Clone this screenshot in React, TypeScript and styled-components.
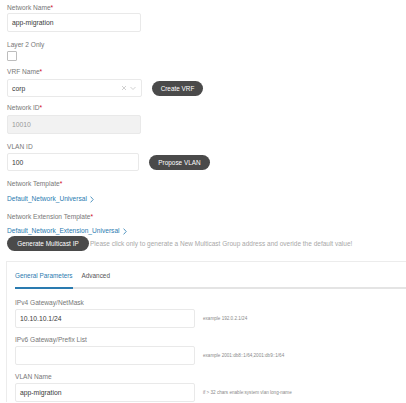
import React from "react";
import styled, { createGlobalStyle } from "styled-components";

const Global = createGlobalStyle`
  html, body { margin: 0; padding: 0; background: #fff; }
  body { font-family: "Liberation Sans", Arial, sans-serif; color: #555; overflow: hidden; }
  * { box-sizing: border-box; }
`;

const Page = styled.div`
  width: 406px;
  height: 403px;
  overflow: hidden;
  padding: 4px 0 0 7px;
  display: flex;
  flex-direction: column;
`;

const Field = styled.div<{ $mb?: number }>`
  display: flex;
  flex-direction: column;
  margin-bottom: ${(p) => p.$mb ?? 9}px;
`;

const Label = styled.div<{ $mb?: number }>`
  font-size: 6.6px;
  line-height: 8px;
  color: #777;
  margin-bottom: ${(p) => p.$mb ?? 1}px;
`;

const Req = styled.span`
  color: #d0021b;
`;

const Row = styled.div`
  display: flex;
  align-items: center;
  gap: 10px;
`;

const Input = styled.div<{ $w?: number; $h?: number; $disabled?: boolean }>`
  width: ${(p) => p.$w ?? 134}px;
  height: ${(p) => p.$h ?? 19}px;
  border: 1px solid #e9e9e9;
  border-radius: 2px;
  background: ${(p) => (p.$disabled ? "#f2f2f2" : "#fff")};
  color: ${(p) => (p.$disabled ? "#9a9a9a" : "#3a3a3a")};
  font-size: 6.8px;
  display: flex;
  align-items: center;
  padding-left: 4px;
  padding-right: 4px;
  gap: 4px;
`;

const Value = styled.span`
  flex: 1;
`;

const Checkbox = styled.div`
  width: 10px;
  height: 10px;
  border: 1px solid #bdbdbd;
  border-radius: 1px;
  background: #fff;
`;

const Pill = styled.button<{ $w: number }>`
  width: ${(p) => p.$w}px;
  height: 15px;
  border: none;
  border-radius: 8px;
  background: #4a4a4a;
  color: #fff;
  font-family: "Liberation Sans", Arial, sans-serif;
  font-size: 6.4px;
  padding: 0;
  display: flex;
  align-items: center;
  justify-content: center;
`;

const Link = styled.div`
  font-size: 6.6px;
  line-height: 8px;
  color: #2a7bb0;
  display: flex;
  align-items: center;
  gap: 3px;
`;

const Note = styled.span`
  font-size: 6.5px;
  color: #a8a8a8;
  margin-left: 1px;
`;

const Panel = styled.div`
  margin-top: 10px;
  margin-left: -1px;
  border-top: 1px solid #ececec;
  border-left: 1px solid #ececec;
  padding: 0 0 0 8px;
  display: flex;
  flex-direction: column;
`;

const Tabs = styled.div`
  display: flex;
  border-bottom: 2px solid #e4e4e4;
  gap: 9px;
  margin-bottom: 10px;
`;

const Tab = styled.div<{ $active?: boolean }>`
  font-size: 6.4px;
  height: 27px;
  padding-top: 10px;
  color: ${(p) => (p.$active ? "#2a7bb0" : "#555")};
  border-bottom: 2px solid ${(p) => (p.$active ? "#2a7bb0" : "transparent")};
  margin-bottom: -2px;
`;

const Hint = styled.span`
  font-size: 4.6px;
  color: #8a8a8a;
  margin-left: -2px;
`;

const Chevron = () => (
  <svg width="4" height="7" viewBox="0 0 4 7">
    <path d="M0.6 0.6 L3.2 3.5 L0.6 6.4" fill="none" stroke="#2a7bb0" strokeWidth="0.8" />
  </svg>
);

const SelectIcons = () => (
  <svg width="16" height="7" viewBox="0 0 16 7">
    <path d="M1 1 L5 5 M5 1 L1 5" stroke="#c4c4c4" strokeWidth="0.8" fill="none" />
    <path d="M9.5 2 L12 4.5 L14.5 2" stroke="#c4c4c4" strokeWidth="0.8" fill="none" />
  </svg>
);

export default function App() {
  return (
    <>
      <Global />
      <Page>
        <Field>
          <Label>
            Network Name<Req>*</Req>
          </Label>
          <Input>
            <Value>app-migration</Value>
          </Input>
        </Field>
        <Field $mb={7}>
          <Label $mb={2}>Layer 2 Only</Label>
          <Checkbox />
        </Field>
        <Field $mb={7}>
          <Label $mb={3}>
            VRF Name<Req>*</Req>
          </Label>
          <Row>
            <Input $w={135} $h={18}>
              <Value>corp</Value>
              <SelectIcons />
            </Input>
            <Pill $w={51}>Create VRF</Pill>
          </Row>
        </Field>
        <Field>
          <Label $mb={3}>
            Network ID<Req>*</Req>
          </Label>
          <Input $disabled>
            <Value>10010</Value>
          </Input>
        </Field>
        <Field>
          <Label $mb={2}>VLAN ID</Label>
          <Row>
            <Input $w={132} $h={18}>
              <Value>100</Value>
            </Input>
            <Pill $w={61}>Propose VLAN</Pill>
          </Row>
        </Field>
        <Field $mb={10}>
          <Label $mb={7}>
            Network Template<Req>*</Req>
          </Label>
          <Link>
            Default_Network_Universal <Chevron />
          </Link>
        </Field>
        <Field $mb={0}>
          <Label $mb={6}>
            Network Extension Template<Req>*</Req>
          </Label>
          <Link>
            Default_Network_Extension_Universal <Chevron />
          </Link>
          <Row style={{ gap: 0, marginTop: 1 }}>
            <Pill $w={82}>Generate Multicast IP</Pill>
            <Note>Please click only to generate a New Multicast Group address and overide the default value!</Note>
          </Row>
        </Field>
        <Panel>
          <Tabs>
            <Tab $active>General Parameters</Tab>
            <Tab>Advanced</Tab>
          </Tabs>
          <Field $mb={8}>
            <Label $mb={2}>IPv4 Gateway/NetMask</Label>
            <Row>
              <Input $w={180}>
                <Value>10.10.10.1/24</Value>
              </Input>
              <Hint>example 192.0.2.1/24</Hint>
            </Row>
          </Field>
          <Field $mb={8}>
            <Label $mb={2}>IPv6 Gateway/Prefix List</Label>
            <Row>
              <Input $w={180} />
              <Hint>example 2001:db8::1/64,2001:db9::1/64</Hint>
            </Row>
          </Field>
          <Field $mb={0}>
            <Label $mb={2}>VLAN Name</Label>
            <Row>
              <Input $w={180}>
                <Value>app-migration</Value>
              </Input>
              <Hint>if &gt; 32 chars enable:system vlan long-name</Hint>
            </Row>
          </Field>
        </Panel>
      </Page>
    </>
  );
}
